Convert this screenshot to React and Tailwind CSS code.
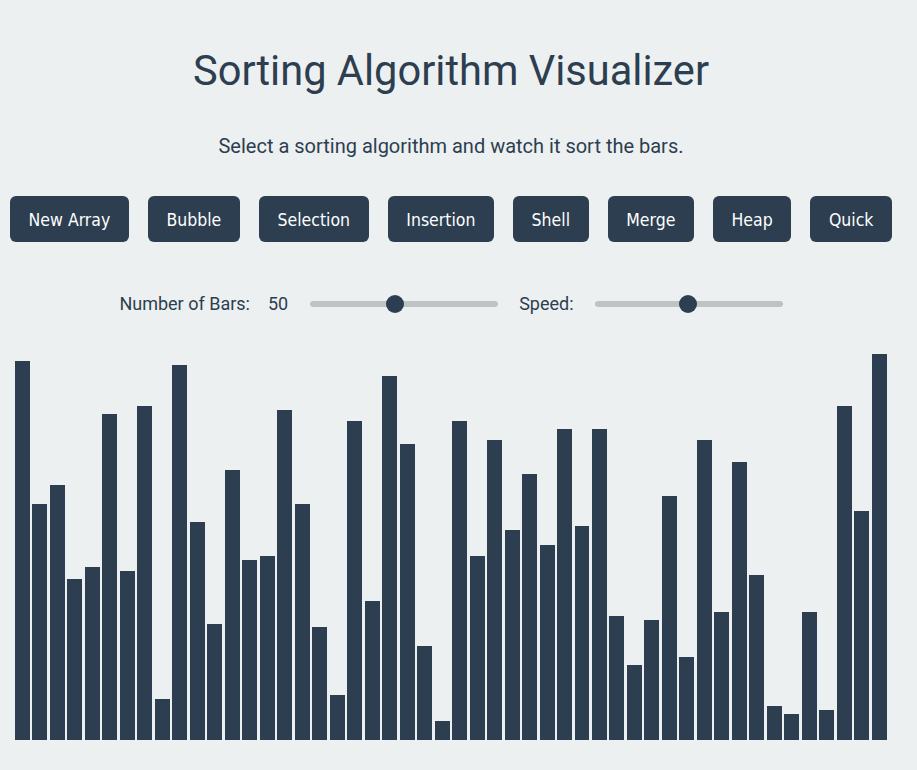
import React from 'react'

const heights = [
  379, 236, 255, 161, 173, 326, 169, 334, 41, 375,
  218, 116, 270, 180, 184, 330, 236, 113, 45, 319,
  139, 364, 296, 94, 19, 319, 184, 300, 210, 266,
  195, 311, 214, 311, 124, 75, 120, 244, 83, 300,
  128, 278, 165, 34, 26, 128, 30, 334, 229, 386,
]

const algorithms = ['New Array', 'Bubble', 'Selection', 'Insertion', 'Shell', 'Merge', 'Heap', 'Quick']

function Slider({ value, min, max, className }) {
  const pct = (value - min) / (max - min)
  return (
    <div className={`relative h-[18px] w-[188px] flex items-center ${className}`}>
      <div className="h-[6px] w-full rounded-full bg-[#bdc3c7]" />
      <div
        className="absolute top-0 h-[18px] w-[18px] rounded-full bg-[#2c3e50]"
        style={{ left: `${pct * 170}px` }}
      />
    </div>
  )
}

export default function App() {
  return (
    <div className="min-h-screen bg-[#ecf0f1] text-[#2c3e50] font-['Roboto',sans-serif]">
      <div className="w-[902px] flex flex-col items-center">
        <h1 className="mt-[47px] text-[41.6px] leading-[48px] font-normal">Sorting Algorithm Visualizer</h1>
        <p className="mt-[37px] text-[20px] leading-[28px]">Select a sorting algorithm and watch it sort the bars.</p>

        <div className="mt-[36px] flex gap-[19px]">
          {algorithms.map((a) => (
            <button
              key={a}
              className="h-[46px] px-[18.6px] pt-[2px] rounded-md bg-[#2c3e50] text-white text-[17.5px] font-['DejaVu_Sans_Condensed','DejaVu_Sans',sans-serif] font-stretch-condensed"
            >
              {a}
            </button>
          ))}
        </div>

        <div className="mt-[48px] flex items-center text-[18px] leading-[28px]">
          <span>Number of Bars:</span>
          <span className="ml-[18px]">50</span>
          <Slider value={50} min={10} max={100} className="ml-[22px]" />
          <span className="ml-[21px]">Speed:</span>
          <Slider value={50} min={1} max={100} className="ml-[21px]" />
        </div>

        <div className="mt-[22px] w-[872px] h-[400px] flex items-end gap-[2.5px]">
          {heights.map((h, i) => (
            <div key={i} className="flex-1 bg-[#2c3e50]" style={{ height: `${h}px` }} />
          ))}
        </div>
      </div>
    </div>
  )
}
